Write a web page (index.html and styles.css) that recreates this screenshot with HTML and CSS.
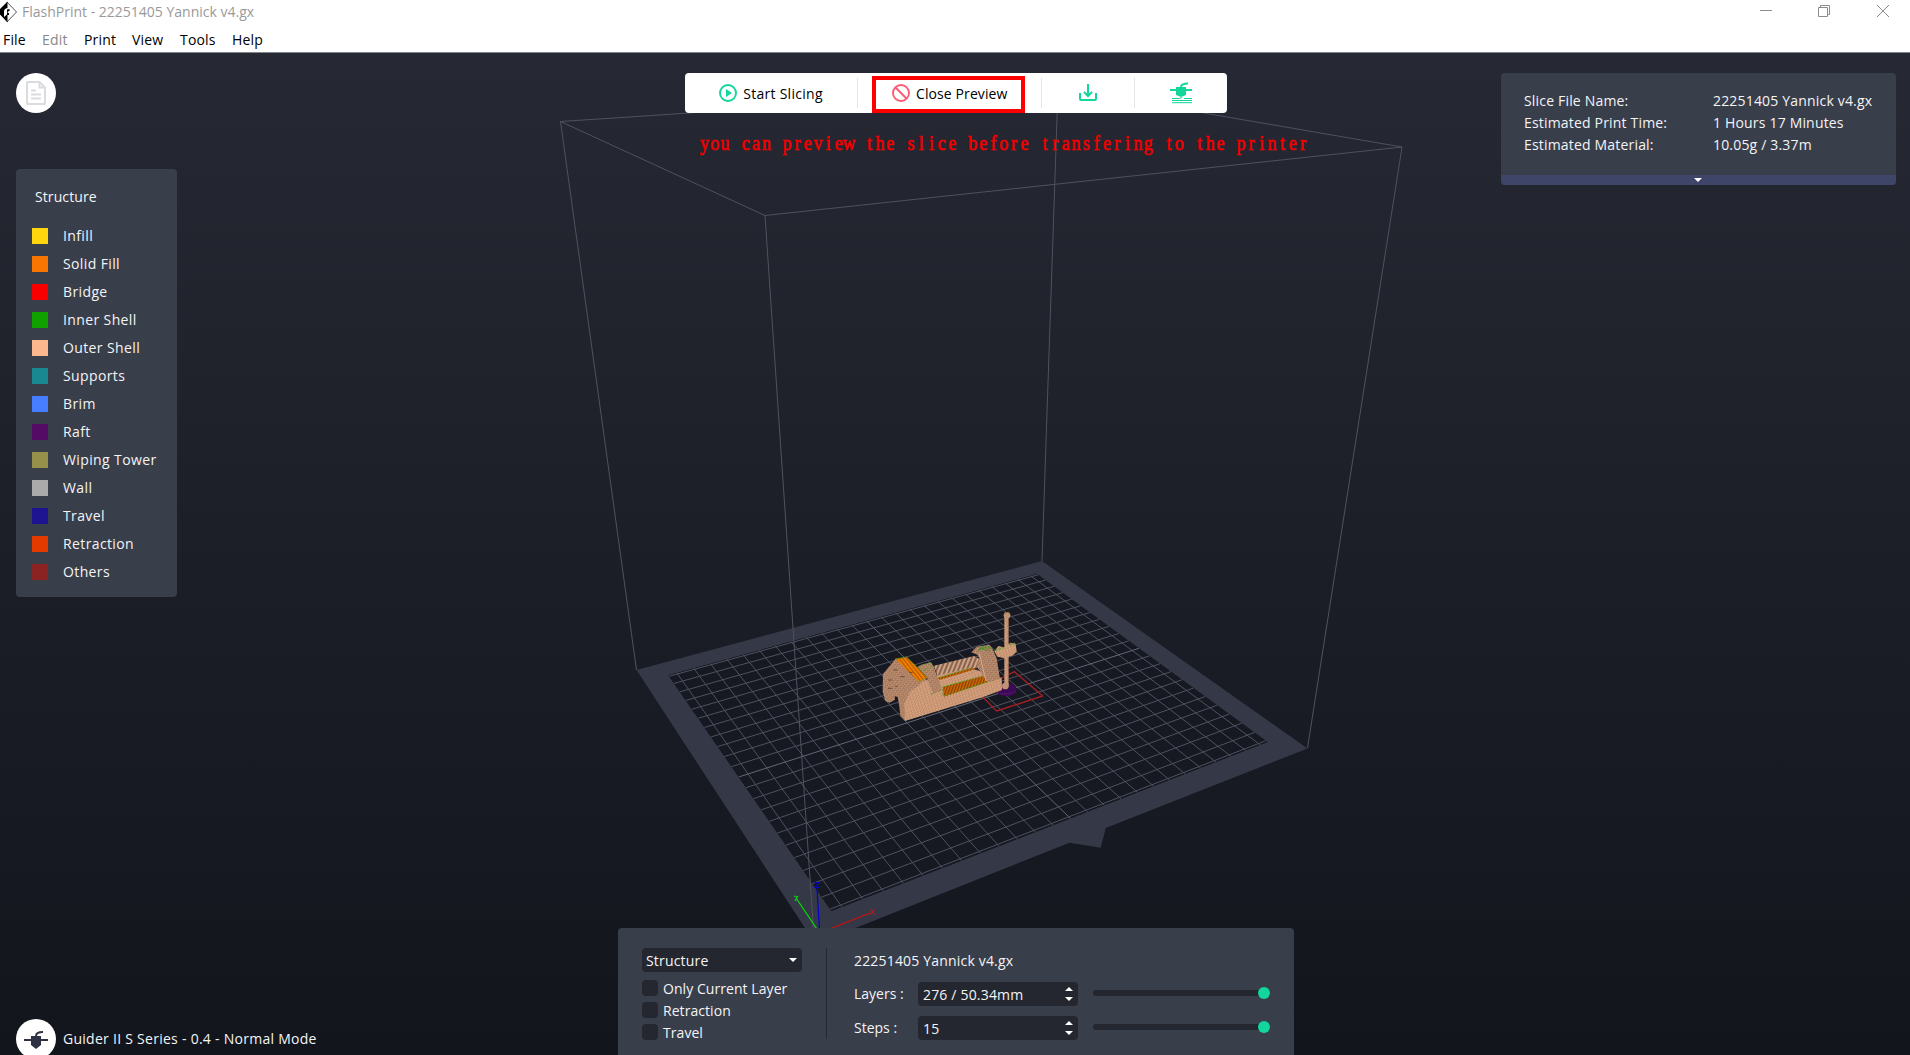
FILE: index.html
```html
<!DOCTYPE html>
<html lang="en">
<head>
<meta charset="utf-8">
<title>FlashPrint - 22251405 Yannick v4.gx</title>
<link rel="stylesheet" href="styles.css">
</head>
<body>
<div class="app">
  <header class="titlebar">
    <svg class="logo" width="18" height="22" viewBox="0 0 18 22"><path d="M7 1L16.500 11L7 21" fill="none" stroke="#555" stroke-width="1"/><path d="M7.500 .5V7Q4 7.500 4 10.500V16L7.500 13V21.500L0 13.500V8Z" fill="#000"/><path d="M7 8.500Q8 8 9.500 8V10Q7.500 10 7.500 12H9V14H7Z" fill="#000"/></svg>
    <span class="title">FlashPrint - 22251405 Yannick v4.gx</span>
    <svg class="winctl" width="130" height="14" viewBox="0 0 130 14" fill="none" stroke="#8c8c8c"><path d="M0 6.500H12"/><path d="M58.500 3.500h9v9h-9zM60.500 3.500v-2h9v9h-2"/><path d="M117 1L129 13M129 1L117 13"/></svg>
  </header>
  <nav class="menu"><span class="m-file">File</span><span class="m-edit">Edit</span><span class="m-print">Print</span><span class="m-view">View</span><span class="m-tools">Tools</span><span>Help</span></nav>

  <main class="viewport">
    <svg class="scene" width="1910" height="1002" viewBox="0 53 1910 1002">
      <g fill="none" stroke="#50515f" stroke-width="1">
        <path d="M560.500 121.500L670 114.300L1058 88L1402 147L765 215.500Z"/>
        <path d="M1058 88L1042 561M560.500 121.500L636.500 670M1402 147L1307.500 748"/>
      </g>
      <path fill="#353846" fill-rule="evenodd" d="M1042 561L1307.500 748.500L1105.800 828L1100.700 847.700L1069.500 842.700L815.400 944L636.500 670ZM1037 574L668.300 675.200L831.300 911L1267.500 742Z"/>
      <path fill="#161921" d="M1037 574L668.300 675.200L831.300 911L1267.500 742Z"/>
      <g id="grid" fill="none" stroke="#4f5260"></g>
      <path d="M765 215.500L813.500 930" stroke="#50515f" fill="none"/>
      <g fill="none" stroke-width="1.200">
        <path stroke="#00e000" d="M796 898L817 929M794 896l3 1M798 896l-3 5"/>
        <path stroke="#0000d8" d="M817 889L819.500 929M814.500 882.500h4l-3.500 5h4"/>
        <path stroke="#d01010" d="M831 928.500L870 913M870.500 909.500l4 5M874.500 909.500l-4 5"/>
      </g>
      <g transform="translate(860 590) scale(.33333)">
        <defs>
          <pattern id="shell" width="9" height="8" patternUnits="userSpaceOnUse" patternTransform="rotate(-17)"><rect width="9" height="8" fill="#e0a983"/><path d="M0 2H6M3 6H9" stroke="#a67a5e" stroke-width="2.400"/></pattern>
          <pattern id="side" width="9" height="8" patternUnits="userSpaceOnUse" patternTransform="rotate(38)"><rect width="9" height="8" fill="#c69474"/><path d="M0 2H6M3 6H9" stroke="#896450" stroke-width="2.400"/></pattern>
          <pattern id="fill" width="8" height="12" patternUnits="userSpaceOnUse" patternTransform="rotate(20)"><rect width="8" height="12" fill="#d56b05"/><path d="M2 0V12" stroke="#7c3a04" stroke-width="3.500"/></pattern>
          <pattern id="solid" width="9" height="12" patternUnits="userSpaceOnUse" patternTransform="rotate(-38)"><rect width="9" height="12" fill="#fa8300"/><path d="M2 0V12" stroke="#ad5200" stroke-width="3.500"/></pattern>
          <pattern id="thread" width="12" height="14" patternUnits="userSpaceOnUse" patternTransform="rotate(22)"><rect width="12" height="14" fill="#d2a182"/><path d="M3 0V14" stroke="#604839" stroke-width="4"/></pattern>
        </defs>
        <path d="M350 303L463 245L548 318L410 363Z" fill="none" stroke="#a61f22" stroke-width="4"/>
        <ellipse cx="439" cy="299" rx="31" ry="20" fill="#3c0a54"/><path d="M410 306q28 14 58-2M411 293q10-11 25-10M420 311h35" stroke="#5b1673" stroke-width="2" fill="none"/>
        <path fill="url(#side)" d="M107 206L69 252L68 305L76 333L89 338L105 329L104 319L113 321L118 350L121 377L135 392L210 300L196 265Z"/>
        <path fill="url(#thread)" d="M222 227L342 198L360 208V230L235 266Z"/>
        <path fill="url(#shell)" d="M190 274L235 256L330 234L425 264L426 300L368 322L135 393L133 340L150 307Z"/>
        <path fill="url(#fill)" d="M234 263L338 233L341 239L238 270Z"/>
        <path fill="url(#shell)" d="M245 270L343 239L370 260L242 291Z"/>
        <path fill="url(#fill)" d="M249 291L370 258L383 276L252 320Z"/>
        <path fill="none" stroke="#529519" stroke-width="2.500" stroke-dasharray="9 3" d="M212 313L249 299V318L382 276L425 263M235 264L336 233M247 291L372 257M107 206L175 274L203 262"/>
        <path fill="url(#solid)" d="M107 208L140 202L203 263L174 274Z"/><path d="M107 207L140 201L203 264" fill="none" stroke="#70910d" stroke-width="2.500"/>
        <path fill="url(#side)" d="M172 231L184 224L213 217L221 230L240 281L245 301L219 312L208 284L201 260Z"/>
        <path fill="none" stroke="#609d32" stroke-width="3" stroke-dasharray="5 4" d="M175 230L210 218L217 229L190 240L207 244"/>
        <path fill="url(#side)" d="M334 187L350 170L389 164L399 180L410 205L420 266L382 277L370 256L350 230L358 205L352 194Z"/>
        <path fill="none" stroke="#f0b795" stroke-width="2" d="M358 190L378 273"/>
        <path fill="none" stroke="#4e8e2a" stroke-width="5" stroke-dasharray="6 4" d="M355 180L393 168M358 174L390 183M365 170L397 176"/>
        <rect x="433" y="75" width="13" height="214" fill="url(#shell)"/><path d="M445 80V280" stroke="#7c5b47" stroke-width="2"/>
        <path fill="url(#shell)" d="M403 184L415 168L432 172L452 158L467 162L470 185L457 197L431 204L412 200Z"/>
        <path fill="none" stroke="#609d32" stroke-width="4" stroke-dasharray="7 4" d="M406 182L433 172M449 165L463 160L466 168"/>
        <circle cx="441" cy="76" r="10" fill="#bf9171"/><path d="M433 70q9-6 16 0" stroke="#896449" stroke-width="3" fill="none"/>
        <circle cx="436" cy="288" r="10" fill="#c19272"/>
        <path d="M100 240h13M85 270h12M120 260h14M84 295h13M105 289h9M148 247h10" stroke="#684b3b" stroke-width="3"/>
      </g>
      <text id="note" class="note" y="150">you can preview the slice before transfering to the printer</text>
    </svg>

    <div class="overlay">
      <aside class="left">
        <div class="round"><svg width="20" height="24" viewBox="0 0 20 24" fill="none" stroke="#dadbe0" stroke-width="2"><path d="M2 1H13.500L19 6.500V22Q19 23 18 23H2Q1 23 1 22V2Q1 1 2 1Z"/><path d="M13.500 1V6.500H19"/><path d="M5 9.500H10M5 13.500H15M5 17.500H15"/></svg></div>
        <section class="legend">
          <h2>Structure</h2>
          <ul>
            <li><i class="sw infill"></i>Infill</li><li><i class="sw solidfill"></i>Solid Fill</li><li><i class="sw bridge"></i>Bridge</li><li><i class="sw inner"></i>Inner Shell</li><li><i class="sw outer"></i>Outer Shell</li><li><i class="sw supports"></i>Supports</li><li><i class="sw brim"></i>Brim</li><li><i class="sw raft"></i>Raft</li><li><i class="sw wiping"></i>Wiping Tower</li><li><i class="sw wall"></i>Wall</li><li><i class="sw travel"></i>Travel</li><li><i class="sw retraction"></i>Retraction</li><li><i class="sw others"></i>Others</li>
          </ul>
        </section>
        <div class="machine"><div class="round"><svg width="24" height="19" viewBox="0 0 24 19"><path d="M0 9H24V11H0Z" fill="#2f3243"/><path d="M7 6H17V15L12 19L7 15Z" fill="#2f3243"/><path d="M12 6Q12 2 19 2" fill="none" stroke="#2f3243" stroke-width="2"/></svg></div><span>Guider II S Series - 0.4 - Normal Mode</span></div>
      </aside>

      <div class="center">
        <div class="toolbar">
          <div class="tool start"><svg width="18" height="18" viewBox="0 0 18 18"><circle cx="9" cy="9" r="8" fill="none" stroke="#12d69c" stroke-width="1.900"/><path d="M7 5L13 9L7 13Z" fill="#12d69c"/></svg><span>Start Slicing</span></div>
          <div class="tool close"><div class="mark"><svg width="18" height="18" viewBox="0 0 18 18" fill="none" stroke="#fb5c74" stroke-width="1.900"><circle cx="9" cy="9" r="8"/><path d="M3.500 3.500L14.500 14.500"/></svg><span>Close Preview</span></div></div>
          <div class="tool save"><svg width="18" height="18" viewBox="0 0 18 18" fill="none" stroke="#12d69c" stroke-width="2"><path d="M1 9V15Q1 16 2 16H16Q17 16 17 15V9"/><path d="M9 0V12M5 8L9 12L13 8"/></svg></div>
          <div class="tool send"><svg width="22" height="22" viewBox="0 0 22 22"><path d="M0 7H22V9H0ZM6 5H16V13L11 15L6 13Z" fill="#12d69c"/><path d="M11 5Q11 1.500 18 1.500" fill="none" stroke="#12d69c" stroke-width="2"/><path d="M2 16.500H10L12 15M2 18.500H22M2 20.700H22M14 16.500H22" fill="none" stroke="#12d69c" stroke-width="1"/></svg></div>
        </div>

        <div class="control">
          <div class="options">
            <div class="select"><span>Structure</span><i class="down"></i></div>
            <label><i class="box"></i><span>Only Current Layer</span></label><label><i class="box"></i><span>Retraction</span></label><label><i class="box"></i><span>Travel</span></label>
          </div>
          <div class="sliders">
            <div class="name">22251405 Yannick v4.gx</div>
            <div class="row"><span class="lab">Layers :</span><div class="spin"><span>276 / 50.34mm</span><b><i class="up"></i><i class="down"></i></b></div><div class="track"><i class="knob"></i></div></div>
            <div class="row"><span class="lab">Steps :</span><div class="spin"><span>15</span><b><i class="up"></i><i class="down"></i></b></div><div class="track"><i class="knob"></i></div></div>
          </div>
        </div>
      </div>

      <aside class="info">
        <dl><dt>Slice File Name:</dt><dd>22251405 Yannick v4.gx</dd><dt>Estimated Print Time:</dt><dd>1 Hours 17 Minutes</dd><dt>Estimated Material:</dt><dd>10.05g / 3.37m</dd></dl>
        <div class="strip"><i class="down"></i></div>
      </aside>
    </div>
  </main>
</div>
<script src="script.js"></script>
</body>
</html>
```
FILE: styles.css
```css
* { box-sizing: border-box; margin: 0; padding: 0; }
body { font: 14px/22px "Open Sans", "Noto Sans", sans-serif; letter-spacing: .18px; color: #f4f4f6; overflow: hidden; }
.app { display: flex; flex-direction: column; height: 1055px; }
.titlebar { height: 24px; display: flex; align-items: center; background: #fff; color: #999; }
.logo { margin-right: 4px; }
.title { flex: 1; letter-spacing: 0; }
.winctl { margin: -2px 20px 0 0; }
.menu { height: 29px; display: flex; padding: 5px 0 0 3px; background: #fff; color: #000; border-bottom: 1px solid #7d8889; }
.menu span { white-space: nowrap; }
.m-file { width: 39px; }
.m-edit { width: 42px; color: #888; }
.m-print { width: 48px; }
.m-view { width: 48px; }
.m-tools { width: 52px; }
.viewport { flex: 1; display: grid; background: linear-gradient(#262833, #12151c); overflow: hidden; height: 1002px; }
.scene, .overlay { grid-area: 1 / 1; }
.note { font-family: "Liberation Serif", serif; font-size: 21px; letter-spacing: 0; fill: #f00000; stroke: #f00000; stroke-width: .7px; text-anchor: middle; transform: scaleX(.86); }
.overlay { display: flex; justify-content: space-between; height: 1002px; padding: 20px 14px 0 16px; }
.left { width: 460px; display: flex; flex-direction: column; align-items: flex-start; }
.round { width: 40px; height: 40px; border-radius: 50%; background: #fff; display: flex; align-items: center; justify-content: center; flex: none; }
.legend { margin-top: 56px; width: 161px; height: 428px; background: #393e4b; border-radius: 4px; padding: 17px 16px; letter-spacing: .38px; }
.legend h2 { font-size: 14px; font-weight: 400; margin-left: 3px; letter-spacing: .1px; }
.legend ul { list-style: none; margin-top: 13px; }
.legend li { height: 28px; display: flex; align-items: center; gap: 15px; white-space: nowrap; padding-top: 1px; }
.sw { width: 16px; height: 16px; }
.infill { background: #ffd60d; }
.solidfill { background: #f77500; }
.bridge { background: #f80000; }
.inner { background: #10a000; }
.outer { background: #fcb78f; }
.supports { background: #198891; }
.brim { background: #467eff; }
.raft { background: #540b65; }
.wiping { background: #97904a; }
.wall { background: #aaa; }
.travel { background: #1e1390; }
.retraction { background: #e33a00; }
.others { background: #8b2323; }
.machine { margin: auto 0 -4px; display: flex; align-items: center; gap: 7px; letter-spacing: .27px; }
.center { width: 676px; margin-left: 142px; margin-right: auto; display: flex; flex-direction: column; justify-content: space-between; }
.toolbar { width: 542px; height: 40px; margin-left: 67px; background: #fff; border-radius: 4px; display: flex; align-items: center; color: #000; white-space: nowrap; }
.tool { height: 30px; display: flex; align-items: center; justify-content: center; border-right: 1px solid #e4e4e4; }
.tool span { padding-top: 1px; }
.start { width: 173px; gap: 6px; letter-spacing: .28px; }
.close { width: 184px; justify-content: flex-start; padding-left: 14px; letter-spacing: .1px; }
.mark { display: flex; align-items: center; gap: 6px; width: 153px; height: 37px; margin: 3px 0 0 0; border: 4px solid #f00; padding: 0 0 3px 16px; flex: none; }
.save { width: 93px; }
.send { width: 92px; border: 0; }
.control { height: 127px; background: #393e4b; border-radius: 4px 4px 0 0; padding: 20px 24px 0; display: flex; white-space: nowrap; }
.options { width: 185px; height: 91px; border-right: 1px solid #252832; }
.select, .spin { width: 160px; height: 24px; border-radius: 4px; background: #242730; display: flex; align-items: center; justify-content: space-between; padding: 0 5px 0 4px; }
.select { margin-bottom: 5px; }
.select span, .spin span, .options label span { padding-top: 1px; }
.options label { display: flex; height: 22px; align-items: center; gap: 5px; letter-spacing: .06px; }
.box { width: 16px; height: 16px; border-radius: 4px; background: #242730; }
.down, .up { display: block; border: 4px solid transparent; border-top-color: #fff; border-bottom: 0; }
.up { border-bottom: 4px solid #fff; border-top: 0; }
.sliders { padding-left: 27px; }
.name { height: 24px; line-height: 25px; }
.row { display: flex; align-items: center; height: 24px; margin-top: 10px; }
.lab { width: 64px; letter-spacing: 0; }
.spin b { display: flex; flex-direction: column; gap: 6px; font-weight: 400; }
.spin { padding-left: 5px; }
.track { width: 177px; height: 6px; margin: -2px 0 0 15px; border-radius: 3px; background: #242730; display: flex; align-items: center; justify-content: flex-end; }
.knob { width: 12px; height: 12px; border-radius: 50%; background: #12d69c; }
.info { width: 395px; height: 112px; background: #393e4b; border-radius: 4px; overflow: hidden; display: flex; flex-direction: column; justify-content: space-between; }
.info dl { display: grid; grid-template-columns: 189px 1fr; padding: 17px 0 0 23px; white-space: nowrap; }
.strip { height: 10px; background: #3f4569; display: flex; align-items: center; justify-content: center; padding-right: 2px; }
```
FILE: script.js
```js
// Print bed corners on screen: front, right, back, left
const [F, R, B, L] = [[831.3, 911], [1267.5, 742], [1037, 574], [668.3, 675.2]];
const d1 = [R[0] - B[0], R[1] - B[1]];
const d2 = [L[0] - B[0], L[1] - B[1]];
const s = [F[0] - R[0] + B[0] - L[0], F[1] - R[1] + B[1] - L[1]];
const det = d1[0] * d2[1] - d2[0] * d1[1];
const g = (s[0] * d2[1] - d2[0] * s[1]) / det;
const h = (d1[0] * s[1] - s[0] * d1[1]) / det;

// Perspective projection of bed coordinates (0..1, 0..1)
function project(u, v) {
  const w = g * u + h * v + 1;
  return [0, 1].map(i =>
    ((R[i] - F[i] + g * R[i]) * u + (L[i] - F[i] + h * L[i]) * v + F[i]) / w);
}

const grid = document.getElementById('grid');
function line(a, b, bright) {
  const p = document.createElementNS('http://www.w3.org/2000/svg', 'path');
  p.setAttribute('d', `M${project(...a)}L${project(...b)}`);
  if (bright) p.setAttribute('stroke', '#646777');
  grid.appendChild(p);
}
for (let i = 0; i < 25; i++) line([(i + .5) / 25, 0], [(i + .5) / 25, 1], i === 12);
for (let j = 1; j < 22; j++) line([0, j / 22], [1, j / 22], j === 11);
line([0, .006], [1, .006]);
line([0, .994], [1, .994]);

// The annotation is set on a fixed character pitch, each letter centred in its cell
const note = document.getElementById('note');
note.setAttribute('x', [...note.textContent].map((c, i) => ((704.5 + i * 10.32) / .86).toFixed(1)).join(' '));
```
